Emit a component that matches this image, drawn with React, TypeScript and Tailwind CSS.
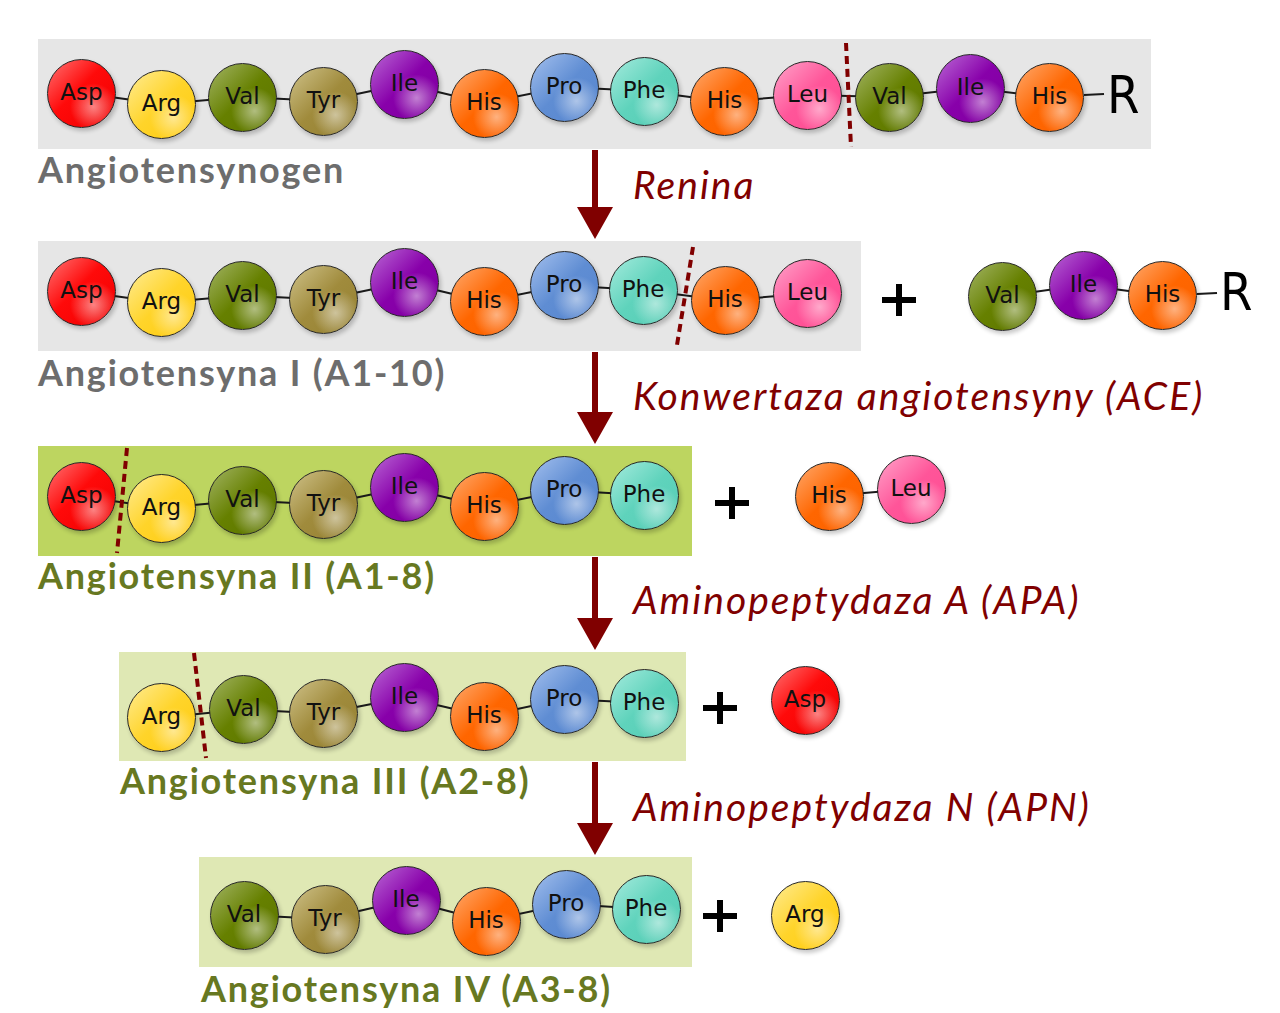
import React from 'react';

type Bead = [string, number, number];

interface RowProps {
  height: number;
  panelClass: string;
  chains: Bead[][];
  plus?: [number, number];
  cut?: [number, number, number, number];
  tail?: { x1: number; x2: number; y: number; left: number; top: number };
}

const fill: Record<string, string> = {
  Asp: 'bg-[linear-gradient(135deg,#ff7474_0%,#ff0a0a_45%,#f00000_100%)]',
  Arg: 'bg-[linear-gradient(135deg,#ffec94_0%,#ffd42a_50%,#ffcc11_100%)]',
  Val: 'bg-[linear-gradient(135deg,#a3b565_0%,#668000_50%,#5d7600_100%)]',
  Tyr: 'bg-[linear-gradient(135deg,#cfc28a_0%,#a08b3c_50%,#968234_100%)]',
  Ile: 'bg-[linear-gradient(135deg,#bb6ad6_0%,#8800aa_50%,#8000a0_100%)]',
  His: 'bg-[linear-gradient(135deg,#ffaa6e_0%,#ff6600_50%,#fb6200_100%)]',
  Pro: 'bg-[linear-gradient(135deg,#a4c0ee_0%,#5f8dd3_50%,#5887d0_100%)]',
  Phe: 'bg-[linear-gradient(135deg,#a5ebdd_0%,#5fd3bc_50%,#58cdb5_100%)]',
  Leu: 'bg-[linear-gradient(135deg,#ffa4ca_0%,#ff5599_50%,#ff4d93_100%)]',
};

function AminoBead({ bead }: { bead: Bead }) {
  const [name, x, y] = bead;
  return (
    <div
      className={`absolute w-[69px] h-[69px] rounded-full border-[1.5px] border-[#262626] shadow-[2px_3px_4px_rgba(0,0,0,0.22)] flex items-center justify-center ${fill[name]}`}
      style={{ left: x - 34.5, top: y - 34.5 }}
    >
      <div className="absolute inset-0 rounded-full bg-[radial-gradient(circle_at_68%_70%,rgba(255,255,255,0.5)_0%,rgba(255,255,255,0)_36%)]" />
      <span className="relative -mt-[2px] font-['DejaVu_Sans',sans-serif] text-[23px] leading-none text-[#111]">
        {name}
      </span>
    </div>
  );
}

function Row({ height, panelClass, chains, plus, cut, tail }: RowProps) {
  return (
    <div className="relative w-[1280px] shrink-0" style={{ height }}>
      <div className={`h-full ${panelClass}`} />
      <svg className="absolute inset-0 overflow-visible" width={1280} height={height}>
        {chains.map((chain, ci) =>
          chain.slice(1).map((b, i) => (
            <line
              key={`${ci}-${i}`}
              x1={chain[i][1]}
              y1={chain[i][2]}
              x2={b[1]}
              y2={b[2]}
              stroke="#1a1a1a"
              strokeWidth={2}
            />
          ))
        )}
        {tail && <line x1={tail.x1} y1={tail.y} x2={tail.x2} y2={tail.y - 1} stroke="#1a1a1a" strokeWidth={2} />}
      </svg>
      {chains.flat().map((b, i) => (
        <AminoBead key={i} bead={b} />
      ))}
      {tail && (
        <span
          className="absolute font-['Liberation_Sans_Narrow','DejaVu_Sans_Condensed','DejaVu_Sans',sans-serif] text-[52px] leading-none text-black"
          style={{ left: tail.left, top: tail.top }}
        >
          R
        </span>
      )}
      {plus && (
        <svg className="absolute" width={34} height={32} style={{ left: plus[0] - 17, top: plus[1] - 16 }}>
          <rect x={0} y={13} width={34} height={6} fill="#000" />
          <rect x={14} y={0} width={6} height={32} fill="#000" />
        </svg>
      )}
      {cut && (
        <svg className="absolute inset-0 overflow-visible pointer-events-none" width={1280} height={height}>
          <line
            x1={cut[0]}
            y1={cut[1]}
            x2={cut[2]}
            y2={cut[3]}
            stroke="#800000"
            strokeWidth={4}
            strokeDasharray="8 5"
          />
        </svg>
      )}
    </div>
  );
}

function Step({
  height,
  labelPad,
  label,
  labelClass,
  enzyme,
  enzymePad,
}: {
  height: number;
  labelPad: string;
  label: string;
  labelClass: string;
  enzyme: string;
  enzymePad: string;
}) {
  return (
    <div className="flex w-[1280px] shrink-0" style={{ height }}>
      <div className={`w-[577px] shrink-0 ${labelPad}`}>
        <div className={`font-['Lato',sans-serif] font-bold text-[36px] tracking-[1.8px] leading-none whitespace-nowrap ${labelClass}`}>
          {label}
        </div>
      </div>
      <svg width={36} height={height - 2} className="shrink-0 mt-[1px]">
        <rect x={15} y={0} width={6} height={height - 34} fill="#800000" />
        <polygon points={`0,${height - 35} 36,${height - 35} 18,${height - 3}`} fill="#800000" />
      </svg>
      <div className={`ml-[20px] ${enzymePad}`}>
        <div className="font-['Lato',sans-serif] italic text-[39px] tracking-[2px] leading-none text-[#800000] whitespace-nowrap">
          {enzyme}
        </div>
      </div>
    </div>
  );
}

const gray = 'bg-[#e6e6e6]';

export default function App() {
  return (
    <div className="w-[1280px] h-[1013px] bg-white overflow-hidden flex flex-col pt-[39px]">
      <Row
        height={110}
        panelClass={`ml-[38px] w-[1113px] ${gray}`}
        chains={[
          [
            ['Asp', 81.5, 54],
            ['Arg', 161.5, 65],
            ['Val', 242.5, 58],
            ['Tyr', 323.5, 62],
            ['Ile', 404.5, 45],
            ['His', 484, 64],
            ['Pro', 564, 48],
            ['Phe', 644, 52],
            ['His', 724.5, 62.5],
            ['Leu', 807.5, 56],
            ['Val', 889.5, 58],
            ['Ile', 970.5, 49],
            ['His', 1049.5, 58],
          ],
        ]}
        tail={{ x1: 1084, x2: 1104, y: 56, left: 1107, top: 30 }}
        cut={[846, 4, 851, 108]}
      />
      <Step
        height={92}
        labelPad="pl-[38px] pt-[2px]"
        label="Angiotensynogen"
        labelClass="text-[#6d6d6d]"
        enzyme="Renina"
        enzymePad="pt-[16px]"
      />
      <Row
        height={110}
        panelClass={`ml-[38px] w-[823px] ${gray}`}
        chains={[
          [
            ['Asp', 81.5, 50.5],
            ['Arg', 161.5, 61.5],
            ['Val', 242.5, 54.5],
            ['Tyr', 323.5, 58.5],
            ['Ile', 404.5, 41.5],
            ['His', 484, 60.5],
            ['Pro', 564, 44.5],
            ['Phe', 643, 49],
            ['His', 725, 59.5],
            ['Leu', 807.5, 52.5],
          ],
          [
            ['Val', 1002.5, 55.5],
            ['Ile', 1083.5, 44],
            ['His', 1162.5, 54.5],
          ],
        ]}
        plus={[898.5, 59]}
        tail={{ x1: 1197, x2: 1217, y: 53, left: 1220, top: 25 }}
        cut={[693, 6, 677, 104]}
      />
      <Step
        height={95}
        labelPad="pl-[38px] pt-[3px]"
        label="Angiotensyna I (A1-10)"
        labelClass="text-[#6d6d6d]"
        enzyme="Konwertaza angiotensyny (ACE)"
        enzymePad="pt-[25px]"
      />
      <Row
        height={110}
        panelClass="ml-[38px] w-[654px] bg-[#bdd560]"
        chains={[
          [
            ['Asp', 81.5, 50.5],
            ['Arg', 161.5, 62],
            ['Val', 242.5, 54.5],
            ['Tyr', 323.5, 58.5],
            ['Ile', 404.5, 41.5],
            ['His', 484, 60.5],
            ['Pro', 564, 44.5],
            ['Phe', 644, 49],
          ],
          [
            ['His', 829, 50],
            ['Leu', 911, 43],
          ],
        ]}
        plus={[732, 57]}
        cut={[127, 2, 117, 107]}
      />
      <Step
        height={96}
        labelPad="pl-[38px] pt-[1px]"
        label="Angiotensyna II (A1-8)"
        labelClass="text-[#677821]"
        enzyme="Aminopeptydaza A (APA)"
        enzymePad="pt-[24px]"
      />
      <Row
        height={109}
        panelClass="ml-[119px] w-[567px] bg-[#dfe8b4]"
        chains={[
          [
            ['Arg', 161.5, 65.5],
            ['Val', 243.5, 57.5],
            ['Tyr', 323.5, 61.5],
            ['Ile', 404.5, 45.5],
            ['His', 484, 64],
            ['Pro', 564, 47],
            ['Phe', 644, 51],
          ],
          [['Asp', 805, 48]],
        ]}
        plus={[720, 56]}
        cut={[194, 1, 206, 106]}
      />
      <Step
        height={96}
        labelPad="pl-[120px] pt-[1px]"
        label="Angiotensyna III (A2-8)"
        labelClass="text-[#677821]"
        enzyme="Aminopeptydaza N (APN)"
        enzymePad="pt-[26px]"
      />
      <Row
        height={110}
        panelClass="ml-[199px] w-[493px] bg-[#dfe8b4]"
        chains={[
          [
            ['Val', 244, 58],
            ['Tyr', 325, 62],
            ['Ile', 406, 43],
            ['His', 486, 64],
            ['Pro', 566, 47],
            ['Phe', 646, 52],
          ],
          [['Arg', 805, 58]],
        ]}
        plus={[720, 59]}
      />
      <div className="pl-[201px] pt-[3px] font-['Lato',sans-serif] font-bold text-[36px] tracking-[1.8px] leading-none whitespace-nowrap text-[#677821]">
        Angiotensyna IV (A3-8)
      </div>
    </div>
  );
}
